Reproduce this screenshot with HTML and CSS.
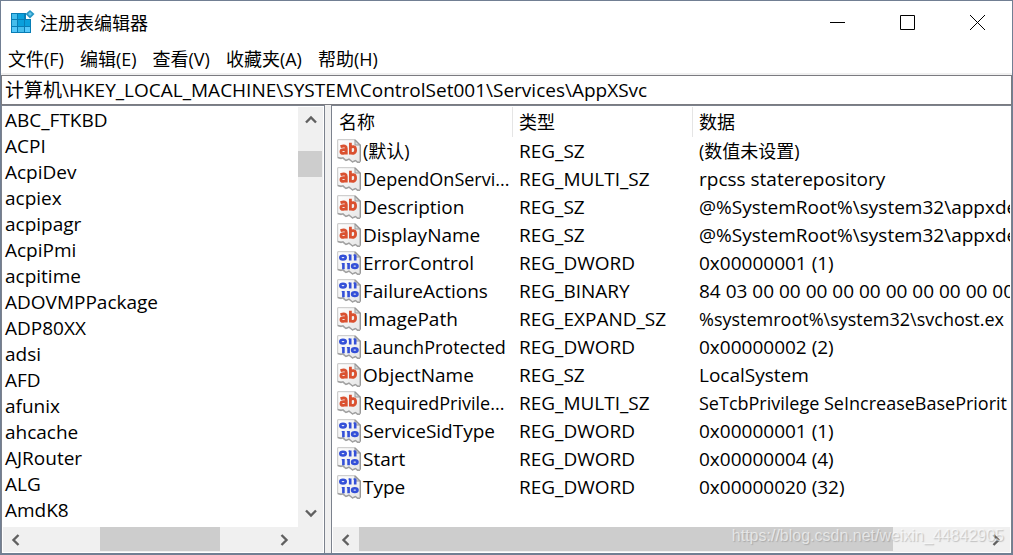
FILE: index.html
```html
<!DOCTYPE html>
<html lang="zh-CN">
<head>
<meta charset="utf-8">
<meta name="viewport" content="width=device-width, initial-scale=1">
<title>注册表编辑器</title>
<link rel="stylesheet" href="styles.css">
</head>
<body>
<svg class="sprite" aria-hidden="true">
  <defs>
    <linearGradient id="paper" x1="0" y1="0" x2="1" y2="1">
      <stop offset="0" stop-color="#ffffff"/>
      <stop offset="1" stop-color="#e6e6e6"/>
    </linearGradient>
  </defs>
  <symbol id="sheet" viewBox="0 0 24 24">
    <path d="M.7.7H18L23.3 6V23L21 23.3 18.5 21.5 15.5 23 12 20.5 8.5 21.5 5 19 .7 18.5Z" fill="url(#paper)" stroke="#c4c4c4"/>
    <path d="M18 .7V6H23.3" fill="#ddd" stroke="#999"/>
    <path d="M18 1L23.3 6.3V22.5" fill="none" stroke="#969696" stroke-width="1.3"/>
    <path d="M.7 18.5L4 19.5 6 18.7 9 21.5 12 20 15.5 23 18.5 21.5 20.5 23.2H23" fill="none" stroke="#a0a0a0" stroke-width="1.4"/>
  </symbol>
  <symbol id="text-value" viewBox="0 0 24 24">
    <use href="#sheet"/>
    <g fill="none" stroke="#da5130" stroke-width="2.8">
      <path d="M3.5 7.6Q9.3 5.8 9.3 9.4V15.5M9.3 10.7H6.6Q3.9 10.7 3.9 12.7T6.4 14.4Q8.3 14.4 9.3 12.7"/>
      <path d="M13.4 3.7V15.5M13.4 8.7Q15 7.2 16.7 7.7Q18.6 8.2 18.6 11T16.5 14.3Q14.6 14.7 13.4 13.3"/>
    </g>
  </symbol>
  <symbol id="binary-value" viewBox="0 0 24 24">
    <use href="#sheet"/>
    <g fill="none" stroke="#3450d8" stroke-width="2.6">
      <ellipse cx="6" cy="6.6" rx="2.7" ry="1.9"/>
      <path d="M13.2 3.5V9.6M18.2 3.5V9.6M6.4 12V18.2M11.6 12V18.2"/>
      <path d="M11.5 4.1H13M16.5 4.1H18M4.7 12.6H6M9.9 12.6H11" stroke-width="1.2"/>
      <ellipse cx="17.8" cy="15.1" rx="2.7" ry="1.9"/>
    </g>
  </symbol>
  <symbol id="arrow-up" viewBox="0 0 12 12"><path d="M1 8.5L6 3.5 11 8.5" fill="none" stroke="#606060" stroke-width="2.4"/></symbol>
  <symbol id="arrow-down" viewBox="0 0 12 12"><path d="M1 3.5L6 8.5 11 3.5" fill="none" stroke="#606060" stroke-width="2.4"/></symbol>
  <symbol id="arrow-left" viewBox="0 0 12 12"><path d="M8.5 1L3.5 6 8.5 11" fill="none" stroke="#606060" stroke-width="2.4"/></symbol>
  <symbol id="arrow-right" viewBox="0 0 12 12"><path d="M3.5 1L8.5 6 3.5 11" fill="none" stroke="#606060" stroke-width="2.4"/></symbol>
</svg>
<div class="window">
  <header class="titlebar">
    <svg class="app-icon" viewBox="0 0 24 24" aria-hidden="true">
      <path d="M0 3H15V9H20V23H0Z" fill="#087db5"/>
      <path d="M1 4H6V9H1ZM1 10H6V16H1ZM7 17H13V22H7Z" fill="#45bdec"/>
      <path d="M7 4H13V9H7ZM7 10H13V16H7ZM14 10H19V16H14Z" fill="#0aa0dc"/>
      <path d="M1 17H6V22H1ZM14 17H19V22H14Z" fill="#55c8fa"/>
      <path d="M19 0L23.5 4 19 8.5 14.5 4Z" fill="#2596c5"/>
      <path d="M19 2L21 4 19 6 17 4Z" fill="#69c8ea"/>
    </svg>
    <h1 class="title">注册表编辑器</h1>
    <button class="caption-button" type="button" aria-label="最小化"><svg viewBox="0 0 15 15"><path d="M0 7.5H15"/></svg></button>
    <button class="caption-button" type="button" aria-label="最大化"><svg viewBox="0 0 15 15"><path d="M.5.5H14.5V14.5H.5Z"/></svg></button>
    <button class="caption-button" type="button" aria-label="关闭"><svg viewBox="0 0 15 15"><path d="M0 0L15 15M15 0L0 15"/></svg></button>
  </header>
  <nav class="menubar" aria-label="菜单">
    <button type="button">文件(F)</button>
    <button type="button">编辑(E)</button>
    <button type="button">查看(V)</button>
    <button type="button">收藏夹(A)</button>
    <button type="button">帮助(H)</button>
  </nav>
  <input class="address" type="text" aria-label="地址" spellcheck="false" value="计算机\HKEY_LOCAL_MACHINE\SYSTEM\ControlSet001\Services\AppXSvc">
  <main class="panes">
    <section class="pane tree-pane" aria-label="注册表项">
      <ul class="tree">
        <li>ABC_FTKBD</li>
        <li>ACPI</li>
        <li>AcpiDev</li>
        <li>acpiex</li>
        <li>acpipagr</li>
        <li>AcpiPmi</li>
        <li>acpitime</li>
        <li>ADOVMPPackage</li>
        <li>ADP80XX</li>
        <li>adsi</li>
        <li>AFD</li>
        <li>afunix</li>
        <li>ahcache</li>
        <li>AJRouter</li>
        <li>ALG</li>
        <li>AmdK8</li>
      </ul>
      <div class="scrollbar vertical">
        <button type="button" aria-label="向上滚动"><svg><use href="#arrow-up"/></svg></button>
        <div class="track"><div class="thumb"></div></div>
        <button type="button" aria-label="向下滚动"><svg><use href="#arrow-down"/></svg></button>
      </div>
      <div class="scrollbar horizontal">
        <button type="button" aria-label="向左滚动"><svg><use href="#arrow-left"/></svg></button>
        <div class="track"><div class="thumb"></div></div>
        <button type="button" aria-label="向右滚动"><svg><use href="#arrow-right"/></svg></button>
      </div>
      <div class="corner"></div>
    </section>
    <section class="pane value-pane" aria-label="注册表值">
      <div class="values-view">
        <table class="values">
          <colgroup><col class="name-column"><col class="type-column"><col></colgroup>
          <thead><tr><th scope="col">名称</th><th scope="col">类型</th><th scope="col">数据</th></tr></thead>
          <tbody>
            <tr class="chinese"><td><div class="name"><svg><use href="#text-value"/></svg>(默认)</div></td><td class="latin">REG_SZ</td><td>(数值未设置)</td></tr>
            <tr><td class="long"><div class="name"><svg><use href="#text-value"/></svg>DependOnServi...</div></td><td>REG_MULTI_SZ</td><td>rpcss staterepository</td></tr>
            <tr><td><div class="name"><svg><use href="#text-value"/></svg>Description</div></td><td>REG_SZ</td><td>@%SystemRoot%\system32\appxde</td></tr>
            <tr><td><div class="name"><svg><use href="#text-value"/></svg>DisplayName</div></td><td>REG_SZ</td><td>@%SystemRoot%\system32\appxde</td></tr>
            <tr><td><div class="name"><svg><use href="#binary-value"/></svg>ErrorControl</div></td><td>REG_DWORD</td><td>0x00000001 (1)</td></tr>
            <tr><td><div class="name"><svg><use href="#binary-value"/></svg>FailureActions</div></td><td>REG_BINARY</td><td>84 03 00 00 00 00 00 00 00 00 00 00</td></tr>
            <tr><td><div class="name"><svg><use href="#text-value"/></svg>ImagePath</div></td><td>REG_EXPAND_SZ</td><td class="long">%systemroot%\system32\svchost.ex</td></tr>
            <tr><td class="long"><div class="name"><svg><use href="#binary-value"/></svg>LaunchProtected</div></td><td>REG_DWORD</td><td>0x00000002 (2)</td></tr>
            <tr><td><div class="name"><svg><use href="#text-value"/></svg>ObjectName</div></td><td>REG_SZ</td><td>LocalSystem</td></tr>
            <tr><td class="long"><div class="name"><svg><use href="#text-value"/></svg>RequiredPrivile...</div></td><td>REG_MULTI_SZ</td><td class="long">SeTcbPrivilege SeIncreaseBasePriorit</td></tr>
            <tr><td><div class="name"><svg><use href="#binary-value"/></svg>ServiceSidType</div></td><td>REG_DWORD</td><td>0x00000001 (1)</td></tr>
            <tr><td><div class="name"><svg><use href="#binary-value"/></svg>Start</div></td><td>REG_DWORD</td><td>0x00000004 (4)</td></tr>
            <tr><td><div class="name"><svg><use href="#binary-value"/></svg>Type</div></td><td>REG_DWORD</td><td>0x00000020 (32)</td></tr>
          </tbody>
        </table>
      </div>
      <div class="scrollbar horizontal">
        <button type="button" aria-label="向左滚动"><svg><use href="#arrow-left"/></svg></button>
        <div class="track"><div class="thumb"></div></div>
        <button type="button" aria-label="向右滚动"><svg><use href="#arrow-right"/></svg></button>
      </div>
      <span class="watermark">https://blog.csdn.net/weixin_44842905</span>
    </section>
  </main>
</div>
</body>
</html>
```
FILE: styles.css
```css
* { box-sizing: border-box; }

body {
  margin: 0;
  background: #fff;
  color: #000;
  font: 18px/26px "Open Sans", "Noto Sans CJK SC", sans-serif;
}

button {
  border: 0;
  padding: 0;
  background: transparent;
  color: inherit;
  font: inherit;
}

.sprite {
  position: absolute;
  width: 0;
  height: 0;
}

.window {
  display: flex;
  flex-direction: column;
  min-height: 100vh;
  border: 1px solid #717f93;
  border-bottom-width: 2px;
}

.titlebar {
  display: flex;
  align-items: center;
  height: 44px;
  padding: 0 0 2px 10px;
}

.app-icon {
  width: 24px;
  height: 24px;
  margin-right: 5px;
}

.title {
  flex: 1;
  margin: 0;
  font: inherit;
  font-family: "Noto Sans CJK SC", sans-serif;
}

.caption-button {
  display: grid;
  place-items: center;
  width: 70px;
  height: 42px;
}

.caption-button svg {
  width: 15px;
  height: 15px;
  fill: none;
  stroke: #000;
}

.menubar {
  display: flex;
  gap: 16px;
  height: 30px;
  padding: 1px 7px 3px;
  border-bottom: 2px solid #f0f0f0;
}

.address {
  width: 100%;
  height: 30px;
  padding: 0 3px 2px;
  border: 1px solid #7b7b80;
  outline: 0;
  background: #fff;
  color: inherit;
  font: inherit;
  font-size: 19px;
}

.panes {
  display: flex;
  flex: 1;
  gap: 6px;
  background: #f0f0f0;
}

.pane {
  display: grid;
  border: 1px solid #7c828d;
  border-bottom: 0;
  padding: 1px;
  background: #fff;
}

.tree-pane {
  flex: 0 0 324px;
  grid-template: 1fr 25px / 1fr 25px;
}

.value-pane {
  position: relative;
  flex: 1;
  min-width: 0;
  grid-template: 1fr 25px / minmax(0, 1fr);
}

.tree {
  margin: 0;
  padding: 0 2px 3px;
  list-style: none;
  font-size: 19px;
}

.scrollbar {
  display: flex;
  background: #f0f0f0;
}

.scrollbar button {
  display: grid;
  place-items: center;
  flex: 0 0 26px;
}

.scrollbar button:last-child { flex-basis: 28px; }

.scrollbar svg {
  width: 12px;
  height: 12px;
}

.track { flex: 1; }

.thumb { background: #cdcdcd; }

.vertical { flex-direction: column; }

.vertical .thumb {
  width: 24px;
  height: 26px;
  margin-top: 18px;
}

.horizontal .thumb { height: 24px; }

.value-pane .thumb { width: 85.7%; }

.tree-pane .horizontal .thumb {
  width: 120px;
  margin-left: 71px;
}

.corner { background: #f0f0f0; }

.values-view { overflow: hidden; }

.values {
  width: 100%;
  table-layout: fixed;
  border-spacing: 0;
  font-size: 19px;
}

.name-column,
.type-column { width: 180px; }

.values th {
  height: 30px;
  padding: 0 6px;
  border-right: 1px solid #e5e5e5;
  font-size: 18px;
  font-weight: 400;
  text-align: left;
}

.values th:last-child { border-right: 0; }

.values td {
  height: 28px;
  padding: 0 0 0 6px;
  white-space: nowrap;
}

.values td:first-child { padding-left: 4px; }

.chinese,
.long { font-size: 18px; }

.chinese .latin { font-size: 19px; }

.name {
  display: flex;
  align-items: center;
  gap: 2px;
}

.name svg {
  flex: none;
  width: 24px;
  height: 24px;
}

.watermark {
  position: absolute;
  right: 7px;
  bottom: 5px;
  color: rgba(255, 255, 255, .6);
  font: 16px/24px "Liberation Sans", sans-serif;
  text-shadow: 1px 1px 1px rgba(120, 120, 120, .4);
  pointer-events: none;
}
```
